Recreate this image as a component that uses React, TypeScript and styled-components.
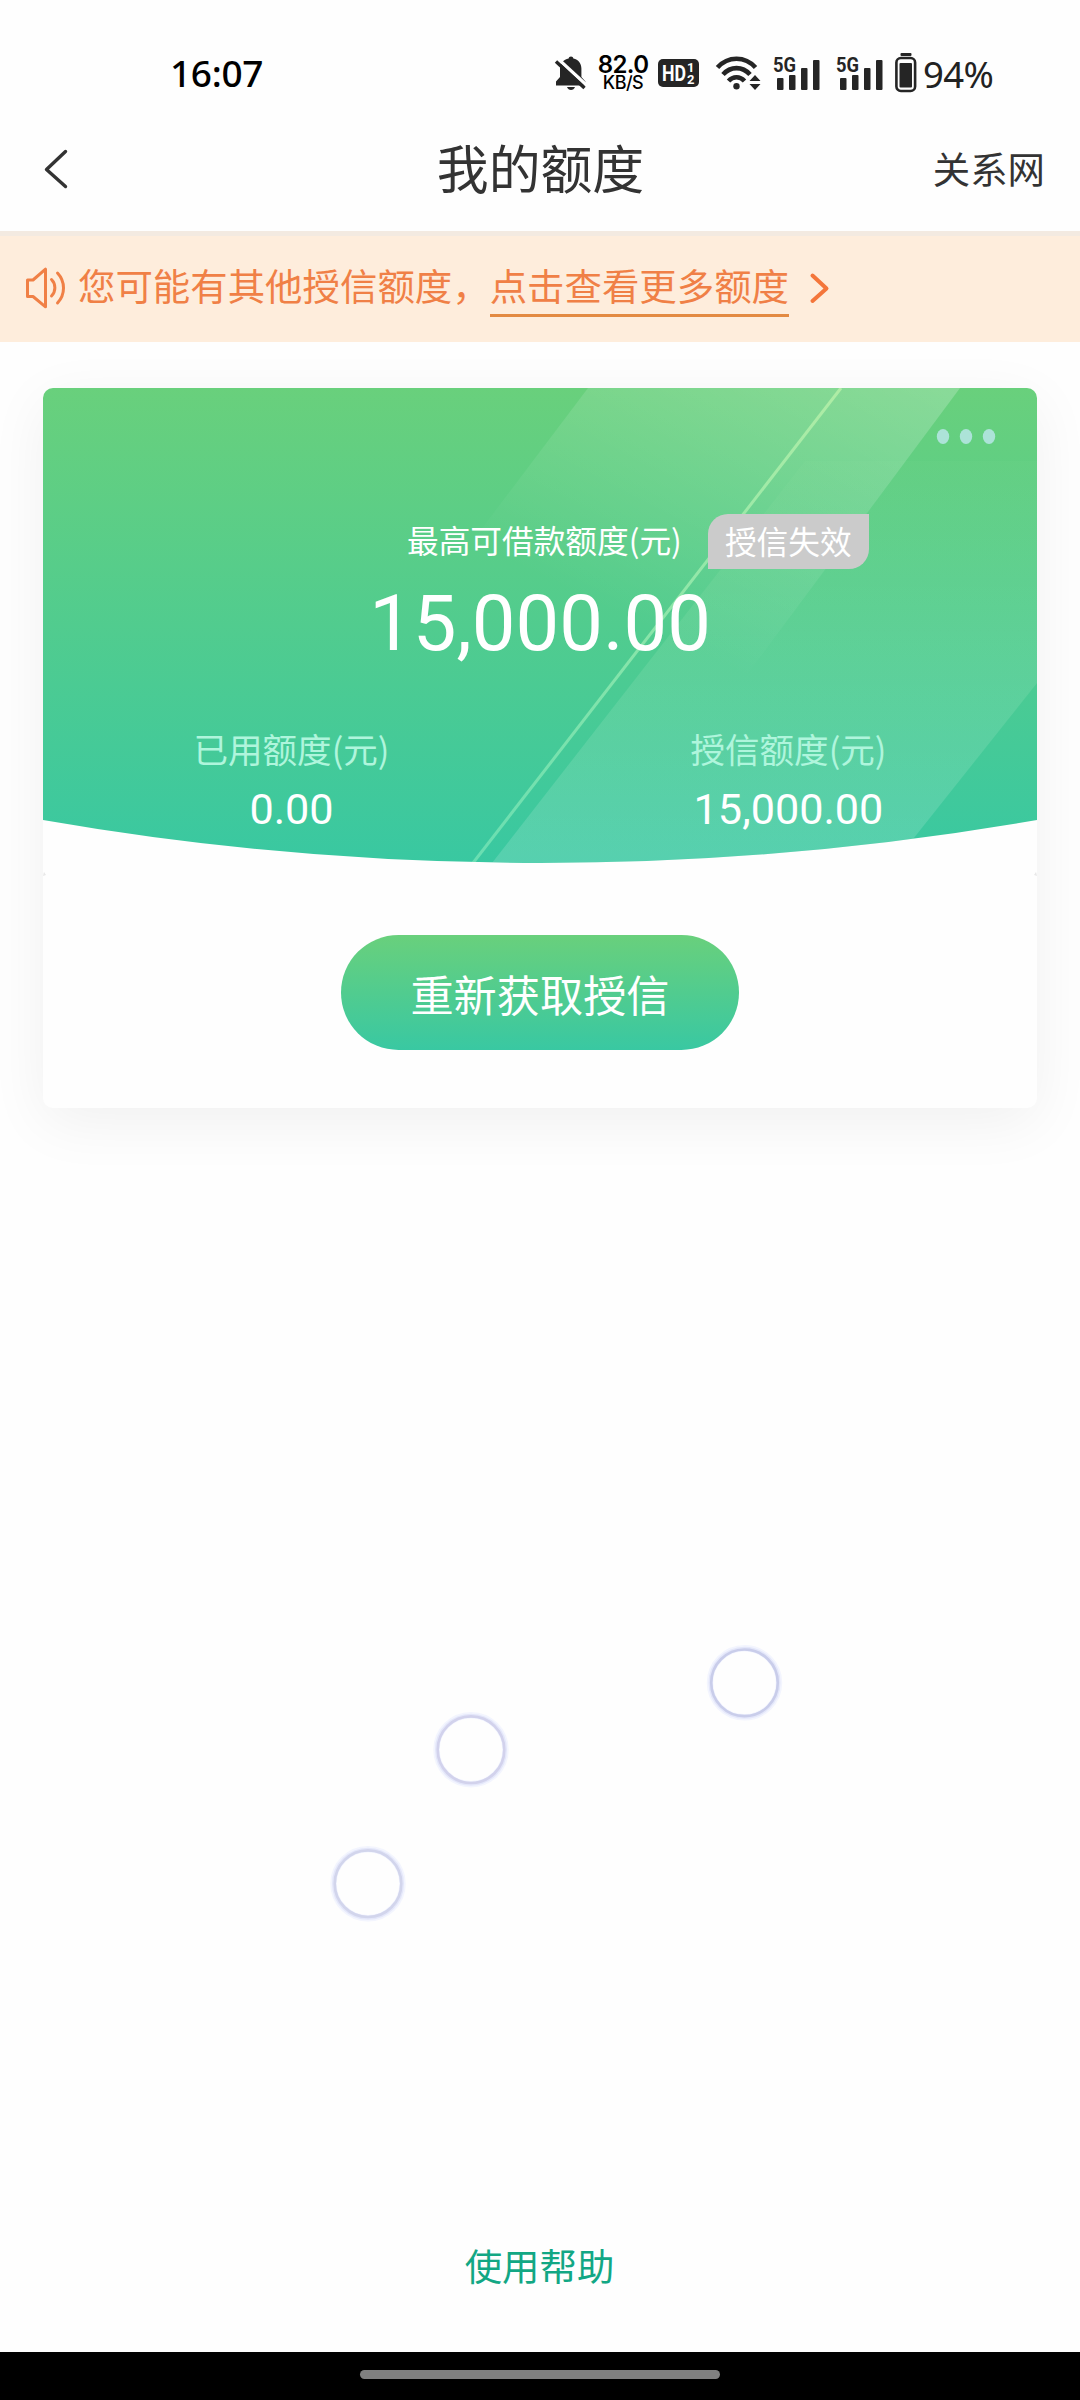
import React from "react";
import styled, { createGlobalStyle } from "styled-components";

const CJK = `"Noto Sans CJK SC", "Noto Sans", sans-serif`;

const GlobalStyle = createGlobalStyle`
  * { box-sizing: border-box; }
  body { margin: 0; background: #fefefe; }
`;

const Screen = styled.div`
  position: relative;
  display: flex;
  flex-direction: column;
  width: 1080px;
  height: 2400px;
  overflow: hidden;
  background: #fefefe;
  font-family: ${CJK};
  color: #333;
`;

/* ---------- status bar ---------- */

const StatusBar = styled.header`
  display: flex;
  align-items: center;
  justify-content: space-between;
  height: 110px;
  padding: 36px 84px 0 170px;
  color: #000;
`;

const Clock = styled.span`
  font: 500 37px/40px "Noto Sans", sans-serif;
  letter-spacing: -0.3px;
`;

const StatusIcons = styled.div`
  display: flex;
  align-items: center;
`;

const Glyph = styled.svg<{ $ml?: number }>`
  display: block;
  flex: none;
  overflow: visible;
  margin-left: ${(p) => p.$ml ?? 0}px;
`;

const NetSpeed = styled.div`
  display: flex;
  flex-direction: column;
  align-items: center;
  width: 52px;
  margin-left: 10px;
  padding-top: 1px;
  font-family: Inter, sans-serif;
  font-weight: 600;
`;

const SpeedValue = styled.span`
  font-size: 24px;
  line-height: 19px;
  letter-spacing: -0.6px;
`;

const SpeedUnit = styled.span`
  font-size: 18px;
  line-height: 18px;
  letter-spacing: -0.5px;
  font-weight: 500;
`;

const BatteryText = styled.span`
  width: 73px;
  margin-left: 6px;
  font: 400 36.5px/40px "Noto Sans", sans-serif;
  letter-spacing: -0.6px;
  white-space: nowrap;
  padding-top: 1px;
  color: #222;
`;

/* ---------- title bar ---------- */

const TitleBar = styled.nav`
  display: grid;
  grid-template-columns: 1fr auto 1fr;
  align-items: center;
  height: 121px;
  padding: 0 35px 5px 44px;
`;

const Title = styled.h1`
  margin: -3px 8px 0 0;
  font-size: 51.84px;
  line-height: 76px;
  font-weight: 400;
`;

const NavLink = styled.span`
  justify-self: end;
  font-size: 37.44px;
  line-height: 54px;
`;

/* ---------- notice ---------- */

const Notice = styled.section`
  display: flex;
  align-items: center;
  height: 111px;
  padding: 0 25px 2px;
  border-top: 5px solid #f3eae1;
  background: #feeddc;
  color: #f08046;
  font-size: 37.44px;
  line-height: 54px;
`;

const NoticeText = styled.span`
  margin: -6px 0 0 13px;
`;

const NoticeLink = styled.a`
  height: 57px;
  margin: 1px 21px 0 0;
  border-bottom: 3px solid #e38a42;
  line-height: 50px;
`;

/* ---------- quota card ---------- */

const Card = styled.section`
  width: 994px;
  height: 720px;
  margin: 46px 43px 0;
  border-radius: 10px;
  background: #fefefe;
  box-shadow: 0 14px 60px rgba(0, 0, 0, 0.06);
`;

const Hero = styled.div`
  position: relative;
  height: 488px;
  padding-top: 126px;
  color: #fff;
`;

const HeroArt = styled.svg`
  position: absolute;
  inset: 0;
`;

const LimitRow = styled.div`
  position: relative;
  display: flex;
  align-items: center;
  height: 55px;
  padding-left: 364px;
  font-size: 31.68px;
  line-height: 46px;
`;

const LimitLabel = styled.span`
  padding-bottom: 6px;
`;

const Badge = styled.span`
  display: flex;
  align-items: center;
  justify-content: center;
  width: 161px;
  height: 55px;
  margin-left: 26px;
  padding-bottom: 4px;
  border-radius: 20px 0 20px 0;
  background: #cbcbcb;
`;

const Amount = styled.div`
  position: relative;
  margin-top: 9px;
  font: 400 77.76px/92px Roboto, sans-serif;
  text-align: center;
`;

const Split = styled.div`
  position: relative;
  display: grid;
  grid-template-columns: 1fr 1fr;
  margin-top: 53px;
  text-align: center;
`;

const SplitLabel = styled.div`
  font-size: 34.56px;
  line-height: 50px;
  color: #aff5dc;
`;

const SplitValue = styled.div`
  margin-top: 11px;
  font: 400 43.2px/52px Roboto, sans-serif;
`;

const Action = styled.button`
  display: block;
  width: 398px;
  height: 115px;
  margin: 59px auto 0;
  padding: 0;
  border: 0;
  border-radius: 58px;
  background: linear-gradient(#69d07c, #39c8a2);
  color: #fff;
  font: 400 43.2px/114px ${CJK};
`;

/* ---------- lower area ---------- */

const Decor = styled.svg`
  display: block;
  margin: 522px 0 0 320px;
  flex: none;
`;

const Help = styled.a`
  margin-top: auto;
  margin-bottom: 60px;
  padding-right: 1px;
  font-size: 37.44px;
  line-height: 54px;
  text-align: center;
  color: #12a784;
`;

const HomeBar = styled.footer`
  flex: none;
  display: flex;
  justify-content: center;
  height: 48px;
  padding-top: 18px;
  background: #000;
`;

const HomePill = styled.div`
  width: 360px;
  height: 9px;
  border-radius: 5px;
  background: #808080;
`;

const BellOff = () => (
  <Glyph width="32" height="36" viewBox="0 0 32 36">
    <path
      d="M16 1.500c1.300 0 2.200.8 2.400 2 5 1 8 5 8 10v8.500l4 4.500v4H1v-4l4-4.500v-8.500c0-5 3.600-9 8.600-10 .2-1.200 1.100-2 2.400-2z"
      fill="#252525"
    />
    <path d="M12 32h8c-.7 2-2.200 3-4 3s-3.300-1-4-3z" fill="#252525" />
    <path d="M1.500 2.500L33 31.500" stroke="#fefefe" strokeWidth="3.400" />
    <path d="M1 6.500L29.500 33" stroke="#252525" strokeWidth="3.400" />
  </Glyph>
);

const HdBadge = () => (
  <Glyph $ml={9} width="41" height="28" viewBox="0 0 41 28" fontFamily="Roboto, sans-serif" fontWeight="700" fill="#fff">
    <rect width="41" height="28" rx="5" fill="#252525" />
    <text x="4" y="22" fontSize="22.500" textLength="24" lengthAdjust="spacingAndGlyphs">HD</text>
    <text x="29" y="13" fontSize="13">1</text>
    <text x="29" y="25" fontSize="13">2</text>
  </Glyph>
);

const Wifi = () => (
  <Glyph $ml={17} width="45" height="34" viewBox="0 0 45 34">
    <g fill="none" stroke="#252525" strokeWidth="4.600">
      <path d="M1.500 11.500C12-.2 29-.2 39.500 11.500" />
      <path d="M7 18.500c7.500-8.500 19.500-8.500 27 0" />
      <path d="M12.500 25c4.500-5 11.500-5 16 0" />
    </g>
    <circle cx="20.500" cy="30.300" r="3.200" fill="#252525" />
    <path d="M33.500 25l5.500-6 5.500 6zM33.500 28l5.500 6 5.500-6z" fill="#252525" />
  </Glyph>
);

const Signal = ({ ml }: { ml: number }) => (
  <Glyph $ml={ml} width="48" height="42" viewBox="0 -5 48 42" fill="#252525">
    <text x="0" y="15" fontFamily="Roboto, sans-serif" fontWeight="700" fontSize="20.500" textLength="23" lengthAdjust="spacingAndGlyphs">
      5G
    </text>
    <rect x="4" y="21" width="6.500" height="12" rx="1" />
    <rect x="16" y="18" width="6.500" height="15" rx="1" />
    <rect x="28" y="11" width="6.500" height="22" rx="1" />
    <rect x="40" y="3" width="6.500" height="30" rx="1" />
  </Glyph>
);

const Battery = () => (
  <Glyph $ml={11} width="22" height="40" viewBox="0 0 22 40">
    <rect x="5.500" y="0" width="11" height="3" rx="1" fill="#252525" />
    <rect x="1.400" y="5" width="18.700" height="33" rx="4.500" fill="none" stroke="#252525" strokeWidth="2.600" />
    <rect x="4.500" y="10" width="12.500" height="24.500" rx="1" fill="#252525" />
  </Glyph>
);

const BackIcon = () => (
  <Glyph width="24" height="40" viewBox="0 0 24 40">
    <path d="M21.500 3.500L2.500 21.500 21.500 38.500" fill="none" stroke="#333" strokeWidth="3.400" strokeLinecap="round" strokeLinejoin="round" />
  </Glyph>
);

const SpeakerIcon = () => (
  <Glyph width="40" height="42" viewBox="0 0 40 42">
    <g fill="none" stroke="#f08046" strokeWidth="3" strokeLinecap="round" strokeLinejoin="round">
      <path d="M2.500 13h5.500L20.500 2.200v37.600L8 29.500H2.500z" />
      <path d="M26.500 12.500c4.500 4.500 4.500 12 0 16.500" />
      <path d="M32.500 6c8 8.500 8 21.500 0 30" />
    </g>
  </Glyph>
);

const ChevronIcon = () => (
  <Glyph width="20" height="30" viewBox="0 0 20 30">
    <path d="M2.500 2.500L16.500 15.500 2.500 28" fill="none" stroke="#f4763b" strokeWidth="4" strokeLinecap="round" strokeLinejoin="round" />
  </Glyph>
);

const HeroBackground = () => (
  <HeroArt width="994" height="488" viewBox="0 0 994 488">
    <defs>
      <linearGradient id="base" x1="0" y1="0" x2="0" y2="475" gradientUnits="userSpaceOnUse">
        <stop offset="0" stopColor="#69d07c" />
        <stop offset="1" stopColor="#39c8a1" />
      </linearGradient>
      <linearGradient id="upper" x1="917" y1="0" x2="763" y2="319" gradientUnits="userSpaceOnUse">
        <stop offset="0" stopColor="#fff" stopOpacity="0.220" />
        <stop offset="1" stopColor="#fff" stopOpacity="0" />
      </linearGradient>
      <linearGradient id="lower" x1="0" y1="73" x2="0" y2="475" gradientUnits="userSpaceOnUse">
        <stop offset="0" stopColor="#e8ffc8" stopOpacity="0.020" />
        <stop offset="0.500" stopColor="#f0ffe0" stopOpacity="0.100" />
        <stop offset="1" stopColor="#fff" stopOpacity="0.150" />
      </linearGradient>
      <linearGradient id="ray" x1="0" y1="0" x2="0" y2="475" gradientUnits="userSpaceOnUse">
        <stop offset="0" stopColor="#b6f0a8" stopOpacity="0.850" />
        <stop offset="1" stopColor="#8ff0c0" stopOpacity="0.550" />
      </linearGradient>
      <clipPath id="hero">
        <path d="M0 10A10 10 0 0 1 10 0H984A10 10 0 0 1 994 10V432A2894 2894 0 0 1 0 432z" />
      </clipPath>
    </defs>
    <g clipPath="url(#hero)">
      <rect width="994" height="488" fill="url(#base)" />
      <path d="M545 0H917L680 319H304z" fill="url(#upper)" />
      <path d="M762 73H994V295L851 475H449z" fill="url(#lower)" />
      <path d="M798 0L430 475" stroke="url(#ray)" strokeWidth="3" />
    </g>
    {[900, 923, 946].map((cx) => (
      <ellipse key={cx} cx={cx} cy="48.500" rx="6.200" ry="7.400" fill="#ace3d8" />
    ))}
    <path d="M0 488l3-1-2-3zM994 488l-3-1 2-3z" fill="#e8e8e8" />
  </HeroArt>
);

const rings = [
  { cx: 424.5, cy: 52.8, color: "#c9cdea" },
  { cx: 151, cy: 119.7, color: "#d2d2ec" },
  { cx: 48, cy: 253.7, color: "#d2d5ec" },
];

const Rings = () => (
  <Decor width="480" height="310" viewBox="0 0 480 310" fill="none">
    {rings.map((r) => (
      <g key={r.cx}>
        <circle cx={r.cx} cy={r.cy} r="34.500" stroke="#f3f5fe" strokeWidth="6.500" />
        <circle cx={r.cx} cy={r.cy} r="34" stroke="#e4e7fa" strokeWidth="4" />
        <circle cx={r.cx} cy={r.cy} r="33.300" stroke={r.color} strokeWidth="2.600" />
      </g>
    ))}
  </Decor>
);

export default function App() {
  return (
    <Screen>
      <GlobalStyle />
      <StatusBar>
        <Clock>16:07</Clock>
        <StatusIcons>
          <BellOff />
          <NetSpeed>
            <SpeedValue>82.0</SpeedValue>
            <SpeedUnit>KB/S</SpeedUnit>
          </NetSpeed>
          <HdBadge />
          <Wifi />
          <Signal ml={12} />
          <Signal ml={15} />
          <Battery />
          <BatteryText>94%</BatteryText>
        </StatusIcons>
      </StatusBar>
      <TitleBar>
        <BackIcon />
        <Title>我的额度</Title>
        <NavLink>关系网</NavLink>
      </TitleBar>
      <Notice>
        <SpeakerIcon />
        <NoticeText>您可能有其他授信额度，</NoticeText>
        <NoticeLink>点击查看更多额度</NoticeLink>
        <ChevronIcon />
      </Notice>
      <Card>
        <Hero>
          <HeroBackground />
          <LimitRow>
            <LimitLabel>最高可借款额度(元)</LimitLabel>
            <Badge>授信失效</Badge>
          </LimitRow>
          <Amount>15,000.00</Amount>
          <Split>
            <div>
              <SplitLabel>已用额度(元)</SplitLabel>
              <SplitValue>0.00</SplitValue>
            </div>
            <div>
              <SplitLabel>授信额度(元)</SplitLabel>
              <SplitValue>15,000.00</SplitValue>
            </div>
          </Split>
        </Hero>
        <Action>重新获取授信</Action>
      </Card>
      <Rings />
      <Help>使用帮助</Help>
      <HomeBar>
        <HomePill />
      </HomeBar>
    </Screen>
  );
}
